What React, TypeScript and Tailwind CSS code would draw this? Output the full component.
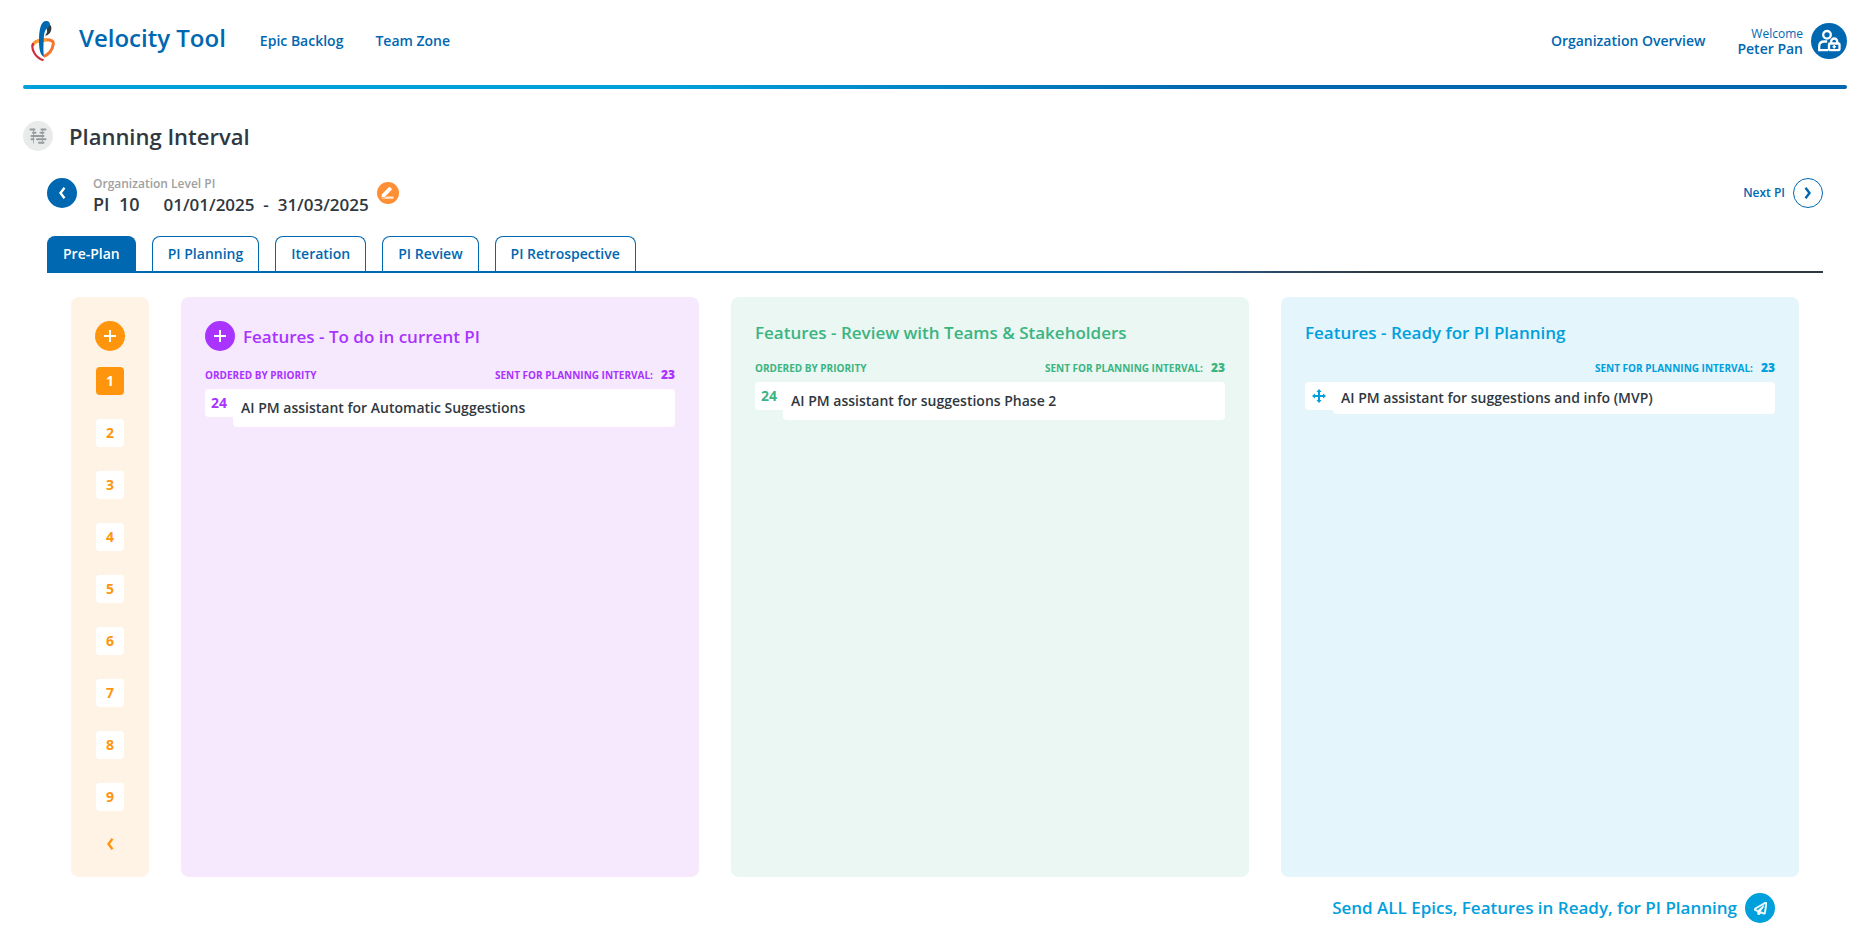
import { useState } from "react";
import { FaRegPaperPlane } from "react-icons/fa";
import clsx from "clsx";

interface Feature {
  id: string;
  title: string;
  priority?: number;
}

interface Column {
  id: string;
  title: string;
  canAdd: boolean;
  ordered: boolean;
  sent: number;
  panel: string;
  accent: string;
  features: Feature[];
}

const tabs = ["Pre-Plan", "PI Planning", "Iteration", "PI Review", "PI Retrospective"];

const columns: Column[] = [
  {
    id: "todo",
    title: "Features - To do in current PI",
    canAdd: true,
    ordered: true,
    sent: 23,
    panel: "bg-[#f6e9fe]",
    accent: "text-[#a933ff]",
    features: [{ id: "f1", title: "AI PM assistant for Automatic Suggestions", priority: 24 }],
  },
  {
    id: "review",
    title: "Features - Review with Teams & Stakeholders",
    canAdd: false,
    ordered: true,
    sent: 23,
    panel: "bg-[#eaf7f2]",
    accent: "text-[#3cb482]",
    features: [{ id: "f2", title: "AI PM assistant for suggestions Phase 2", priority: 24 }],
  },
  {
    id: "ready",
    title: "Features - Ready for PI Planning",
    canAdd: false,
    ordered: false,
    sent: 23,
    panel: "bg-[#e4f5fc]",
    accent: "text-[#00a0dd]",
    features: [{ id: "f3", title: "AI PM assistant for suggestions and info (MVP)" }],
  },
];

function Logo() {
  return (
    <svg viewBox="0 0 24 40" className="h-10 w-6" aria-hidden="true">
      <path d="M17.500 3C19.800 3.500 20.800 6 20.300 8.500C19.600 12 17.300 14.600 14 14.600C16 12.500 16.500 10.500 15.800 8Z" fill="#2f3b43" />
      <path d="M1.500 25C2.500 21 8 18.800 15 18.800C20.500 18.800 22.800 20.300 22.300 23C21.500 28 18.500 33 13 35.300" fill="none" stroke="#f5762f" strokeWidth="3" />
      <path d="M2.500 22.300C5.500 19.800 10 18.900 16 18.900" fill="none" stroke="#ff9a33" strokeWidth="3" />
      <path d="M2.200 22.300C-.5 27.500 4 36.500 12.500 39.300" fill="none" stroke="#cf2e3f" strokeWidth="2.200" />
      <path d="M16.500 7C14 8.500 13 12 12.800 17C12.500 24 12 30 13 36C9.500 34 8 29 8 20C8 8 10 0 15 0C18 0 19.500 2 18.800 4.200Q18.200 6 16.500 7Z" fill="#0067b1" />
    </svg>
  );
}

function BoardIcon() {
  return (
    <svg viewBox="0 0 18 18" className="size-[18px]" aria-hidden="true" stroke="#969b9e" fill="none" strokeLinecap="round">
      <path d="M4.500 2v14M13.500 2v14" strokeWidth="1" strokeOpacity=".7" />
      <path d="M1.500 2.500h4M12.500 2.500h4M4 5.700h2.500M11.500 5.700h3M2.500 9h12M2.500 12.300h2M8 12.300h8.500M10 15.800h4.500" strokeWidth="2" />
    </svg>
  );
}

function UserLockIcon() {
  return (
    <svg viewBox="0 0 24 24" className="size-6" aria-hidden="true" fill="none" stroke="#fff" strokeWidth="2.300">
      <circle cx="10" cy="5.800" r="3.800" />
      <path d="M11 21.200H2.200v-4c0-3 2.200-4.700 5.300-4.700h2.700" />
      <path d="M14.200 14.500v-2a3 3 0 0 1 6 0v2" />
      <rect x="12" y="14.500" width="10.500" height="6.700" rx="1" />
      <path d="M17.200 16v3.500M15.500 17.800h3.500" strokeWidth="1.500" />
    </svg>
  );
}

function PencilIcon() {
  return (
    <svg viewBox="0 0 22 22" className="size-[22px]" aria-hidden="true" fill="#fff">
      <path d="M11.800 5.300q.7-.7 1.500 0l1.200 1.100q.7.700 0 1.500l-6.700 7-3.300.6.400-3.300z" />
      <path d="M10.300 14.600h6.200v2.200H4.500z" fillOpacity=".8" />
    </svg>
  );
}

function PlusIcon() {
  return (
    <svg viewBox="0 0 12 12" className="size-3" aria-hidden="true" stroke="#fff" strokeWidth="2">
      <path d="M6 0v12M0 6h12" />
    </svg>
  );
}

function Chevron({ direction }: { direction: "left" | "right" }) {
  return (
    <svg viewBox="0 0 8 12" className="h-3 w-2" aria-hidden="true" fill="none" stroke="currentColor" strokeWidth="2.400">
      <path d={direction === "left" ? "M6.500 .8L2.500 6l4 5.200" : "M1.500 .8L5.500 6l-4 5.200"} />
    </svg>
  );
}

function MoveIcon() {
  return (
    <svg viewBox="0 0 14 14" className="size-3.5" aria-hidden="true" fill="currentColor">
      <path d="M7 0l2.600 3H8v3h3V4.400L14 7l-3 2.600V8H8v3h1.600L7 14l-2.600-3H6V8H3v1.600L0 7l3-2.600V6h3V3H4.400z" />
    </svg>
  );
}

function Header() {
  return (
    <header>
      <div className="flex h-[85px] items-center pb-1">
        <a href="#" aria-label="Home" className="ml-2">
          <Logo />
        </a>
        <a href="#" className="ml-6 pb-1.5 text-2xl font-semibold">Velocity Tool</a>
        <nav className="ml-[34px] flex flex-1 gap-8 text-sm font-semibold">
          <a href="#">Epic Backlog</a>
          <a href="#">Team Zone</a>
          <a href="#" className="ml-auto">Organization Overview</a>
        </nav>
        <div className="ml-8 text-right">
          <p className="text-xs leading-[15px]">Welcome</p>
          <p className="text-sm leading-[15px] font-semibold">Peter Pan</p>
        </div>
        <button aria-label="Account" className="ml-2 flex size-9 items-center justify-center rounded-full bg-[#0067b1]">
          <UserLockIcon />
        </button>
      </div>
      <div className="h-1 rounded-full bg-linear-to-r from-[#00a0dd] from-35% to-[#0067b1] to-65%" />
    </header>
  );
}

function FeatureColumn({ column }: { column: Column }) {
  return (
    <section className={clsx("rounded-lg p-6", column.panel, column.accent)}>
      <div className="flex items-center gap-2">
        {column.canAdd && (
          <button aria-label="Add feature" className="flex size-[30px] items-center justify-center rounded-full bg-[#a933ff]">
            <PlusIcon />
          </button>
        )}
        <h2 className="text-[17px] leading-[23px] font-semibold">{column.title}</h2>
      </div>
      <div className="mt-4 flex h-4 items-center text-[10px] font-bold uppercase">
        {column.ordered && <span>Ordered by priority</span>}
        <span className="ml-auto">Sent for planning interval:</span>
        <span className="ml-2 text-xs font-extrabold">{column.sent}</span>
      </div>
      <ul className="mt-1.5">
        {column.features.map((feature) => (
          <li key={feature.id} className="flex items-start">
            <span className="flex size-7 items-center justify-center rounded-l bg-white text-sm font-bold">
              {feature.priority ?? <MoveIcon />}
            </span>
            <a
              href="#"
              className={clsx(
                "flex-1 rounded-r rounded-bl bg-white px-2 text-sm font-semibold text-[#30383f]",
                feature.priority ? "py-[9px]" : "py-1.5"
              )}
            >
              {feature.title}
            </a>
          </li>
        ))}
      </ul>
    </section>
  );
}

export default function App() {
  const [activeTab, setActiveTab] = useState("Pre-Plan");
  const [page, setPage] = useState(1);

  return (
    <div className="bg-white pr-[25px] pl-[23px] font-['Open_Sans',sans-serif] text-[#0067b1]">
      <Header />

      <div className="mt-[31px] flex items-center gap-4">
        <span className="flex size-[30px] items-center justify-center rounded-full bg-[#e9ebeb]">
          <BoardIcon />
        </span>
        <h1 className="text-[22px] leading-8 font-semibold text-[#30383f]">Planning Interval</h1>
      </div>

      <main className="px-6">
        {/* PI navigation */}
        <div className="mt-[17px] flex h-12 items-center">
          <button aria-label="Previous PI" className="flex size-[30px] items-center justify-center rounded-full bg-[#0067b1] text-white">
            <Chevron direction="left" />
          </button>
          <div className="ml-4 pt-1.5 font-semibold text-[#30383f]">
            <p className="text-xs leading-4 text-[#a0a0a0]">Organization Level PI</p>
            <p className="flex items-baseline leading-6">
              <span className="text-lg leading-6">PI&nbsp; 10</span>
              <span className="ml-6 text-[17px]">01/01/2025&nbsp; -&nbsp; 31/03/2025</span>
            </p>
          </div>
          <button aria-label="Edit PI" className="ml-2 rounded-full bg-[#ff8f35]">
            <PencilIcon />
          </button>
          <button className="ml-auto flex items-center gap-2 text-xs font-semibold">
            Next PI
            <span className="flex size-[30px] items-center justify-center rounded-full border border-[#0067b1]">
              <Chevron direction="right" />
            </span>
          </button>
        </div>

        {/* Tabs */}
        <div className="mt-[19px] flex gap-4" role="tablist">
          {tabs.map((tab) => (
            <button
              key={tab}
              role="tab"
              aria-selected={activeTab === tab}
              onClick={() => setActiveTab(tab)}
              className={clsx(
                "h-[35px] rounded-t-lg border border-b-0 border-[#0067b1] px-[15px] text-sm font-semibold",
                activeTab === tab ? "bg-[#0067b1] text-white" : "bg-white"
              )}
            >
              {tab}
            </button>
          ))}
        </div>
        <div className="h-0.5 bg-linear-to-r from-[#0067b1] from-60% to-[#30383f] to-75%" />

        {/* Board */}
        <div className="mt-6 flex gap-8 px-6">
          <aside className="flex w-[78px] flex-col items-center rounded-lg bg-[#fff3e6] py-6 text-[#ff950c]">
            <button aria-label="Add" className="flex size-[30px] items-center justify-center rounded-full bg-[#ff950c]">
              <PlusIcon />
            </button>
            <div className="mt-4 flex flex-col gap-6">
              {[1, 2, 3, 4, 5, 6, 7, 8, 9].map((n) => (
                <button
                  key={n}
                  onClick={() => setPage(n)}
                  className={clsx(
                    "size-7 rounded text-sm font-bold",
                    page === n ? "bg-[#ff950c] text-white" : "bg-white"
                  )}
                >
                  {n}
                </button>
              ))}
            </div>
            <button aria-label="Collapse" className="mt-[27px] mb-[3px]">
              <Chevron direction="left" />
            </button>
          </aside>
          <div className="grid flex-1 grid-cols-3 gap-8">
            {columns.map((column) => (
              <FeatureColumn key={column.id} column={column} />
            ))}
          </div>
        </div>

        <div className="mt-4 flex justify-end pr-12">
          <button className="flex items-center gap-2 text-[17px] font-semibold text-[#00a0dd]">
            Send ALL Epics, Features in Ready, for PI Planning
            <span className="flex size-[30px] items-center justify-center rounded-full bg-[#00a0dd] text-white">
              <FaRegPaperPlane className="size-[13px]" stroke="currentColor" strokeWidth={24} />
            </span>
          </button>
        </div>
      </main>
    </div>
  );
}
